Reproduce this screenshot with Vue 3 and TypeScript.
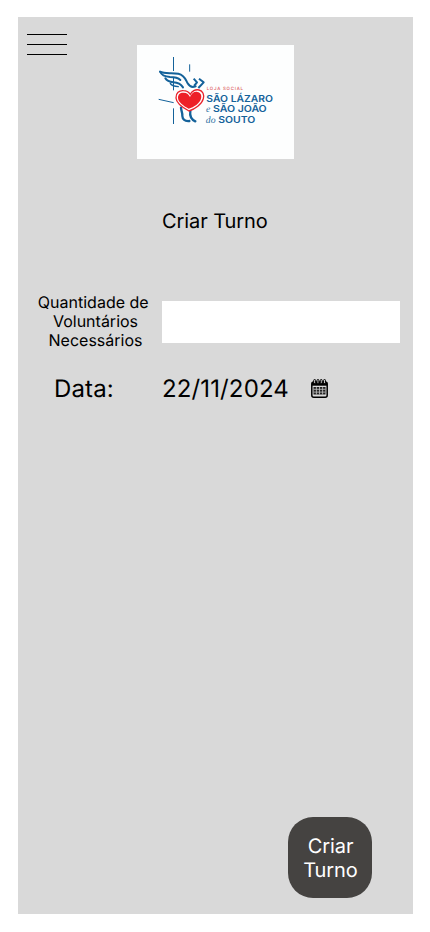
<script setup lang="ts">
import { ref } from 'vue'

const quantity = ref('')
const date = ref('22/11/2024')
const quantityLabel = 'Quantidade de \nVoluntários\nNecessários'
const rings = [2.7, 6, 9.3, 12.6]
</script>

<template>
  <main class="screen">
    <header class="top">
      <button class="menu" type="button">
        <span class="bar"></span>
        <span class="bar"></span>
        <span class="bar"></span>
      </button>
      <svg class="logo" viewBox="21 15 471 342">
        <rect x="21" y="15" width="471" height="342" fill="#fdfefe" />
        <g fill="none" stroke="#14629a" stroke-width="3">
          <path d="M130.500 51V93M130.500 112V151M130.500 205V252M179 73V95M86 178L131 188" />
        </g>
        <g fill="none" stroke="#14629a" stroke-width="6" stroke-linecap="round" stroke-linejoin="round">
          <path d="M90 95C105 103 126 97 145 101C164 105 167 119 173 130C178 139 187 143 197 139" />
          <path d="M91 96C95 107 106 110 120 111C134 111 145 114 151 120" />
          <path d="M106 115C111 124 119 126 130 127C144 128 153 133 159 142" />
          <path d="M121 130C125 138 134 139 145 140" stroke-width="4" />
          <path d="M191 116L201 127L192 138M207 116L221 127L205 144" stroke-linecap="butt" />
          <path d="M153 203C154 215 158 219 157 228C158 239 166 244 178 243" stroke-width="7" />
          <path d="M181 212C179 225 180 237 196 244" stroke-width="7" />
        </g>
        <path d="M177 213C162 205 139 192 138 174C137 159 148 151 160 152C170 152 177 157 181 163C185 154 196 147 207 150C219 153 223 164 220 176C216 193 194 208 177 213Z" fill="#fff" stroke="#e9222b" stroke-width="4" />
        <path d="M176 206C160 197 144 186 144 173C144 163 151 157 161 158C171 158 177 164 180 171C185 160 193 154 202 156C212 158 216 166 213 176C209 190 192 201 176 206Z" fill="#ed2027" />
        <text x="230" y="151" textLength="109" class="tag">LOJA SOCIAL</text>
        <text x="229" y="186" textLength="200" lengthAdjust="spacingAndGlyphs" class="name">SÃO LÁZARO</text>
        <text x="228" y="217" class="script">e</text>
        <text x="249" y="217" textLength="161" lengthAdjust="spacingAndGlyphs" class="name">SÃO JOÃO</text>
        <text x="227" y="248" textLength="30" class="script">do</text>
        <text x="265" y="248" textLength="111" lengthAdjust="spacingAndGlyphs" class="name">SOUTO</text>
      </svg>
    </header>

    <h1 class="title">Criar Turno</h1>

    <form class="form" @submit.prevent>
      <label class="label" for="quantity">{{ quantityLabel }}</label>
      <input id="quantity" v-model="quantity" class="field" type="text" />
      <span class="date-label">Data:</span>
      <div class="date">
        <span>{{ date }}</span>
        <svg class="calendar" viewBox="0 0 17 19">
          <rect x=".8" y="3" width="15.400" height="15.200" rx="2" fill="#d9d9d9" stroke="#000" stroke-width="1.500" />
          <path d="M1 3H16V6.700H1Z" />
          <g fill="#d9d9d9" stroke="#000" stroke-width="1">
            <rect v-for="x in rings" :key="x" :x="x" y=".5" width="1.900" height="4" rx=".9" />
          </g>
          <path d="M2.500 8H14.500V15.500H2.500Z" fill="#222" />
          <path d="M2.500 10.300H14.500M2.500 13.100H14.500M5.400 8V15.500M8.500 8V15.500M11.600 8V15.500" stroke="#c4c4c4" stroke-width=".8" />
        </svg>
      </div>
    </form>

    <button class="submit" type="button">Criar Turno</button>
  </main>
</template>

<style>
body {
  margin: 0;
  background: #fff;
}
</style>

<style scoped>
.screen {
  box-sizing: border-box;
  display: flex;
  flex-direction: column;
  width: 395px;
  height: 897px;
  margin: 17px 17px 18px 18px;
  padding-bottom: 16px;
  background: #d9d9d9;
  color: #000;
  font-family: Inter, sans-serif;
  font-weight: 370;
  text-rendering: geometricPrecision;
}

.top {
  display: flex;
  align-items: flex-start;
  gap: 70px;
  padding: 17px 0 0 9px;
}

.menu {
  display: flex;
  flex-direction: column;
  gap: 9px;
  width: 40px;
  padding: 0;
  border: 0;
  background: none;
}

.bar {
  width: 40px;
  height: 1px;
  background: #000;
}

.logo {
  display: block;
  width: 157px;
  height: 114px;
  margin-top: 11px;
}

.tag {
  fill: #dc5a60;
  font-size: 13px;
  font-weight: 500;
}

.name {
  fill: #14629a;
  font-size: 29px;
  font-weight: 600;
}

.script {
  fill: #2b71a3;
  font-family: "Liberation Serif", serif;
  font-size: 29px;
  font-style: italic;
}

.title {
  margin: 50px 0 0 144px;
  font-size: 20px;
  font-weight: 370;
  line-height: 24px;
  letter-spacing: -0.08px;
}

.form {
  display: grid;
  grid-template-columns: 116px 238px;
  column-gap: 8px;
  align-items: center;
  margin: 60px 0 0 20px;
}

.label {
  margin-left: -1px;
  font-size: 16px;
  line-height: 19px;
  text-align: center;
  white-space: pre;
}

.field {
  box-sizing: border-box;
  width: 238px;
  height: 42px;
  padding: 0 10px;
  border: 0;
  border-radius: 0;
  background: #fff;
  font: inherit;
}

.date-label,
.date {
  margin-top: 24px;
  font-size: 24px;
  line-height: 29px;
  letter-spacing: 0.13px;
}

.date-label {
  padding-left: 16px;
}

.date {
  display: flex;
  align-items: center;
  gap: 22px;
}

.calendar {
  width: 17px;
  height: 19px;
}

.submit {
  width: 84px;
  height: 81px;
  margin: auto 41px 0 auto;
  padding: 0 9px 0 10px;
  border: 0;
  border-radius: 25px;
  background: #454341;
  color: #fff;
  font: 370 20px/24px Inter, sans-serif;
  letter-spacing: -0.08px;
  text-rendering: inherit;
}
</style>
